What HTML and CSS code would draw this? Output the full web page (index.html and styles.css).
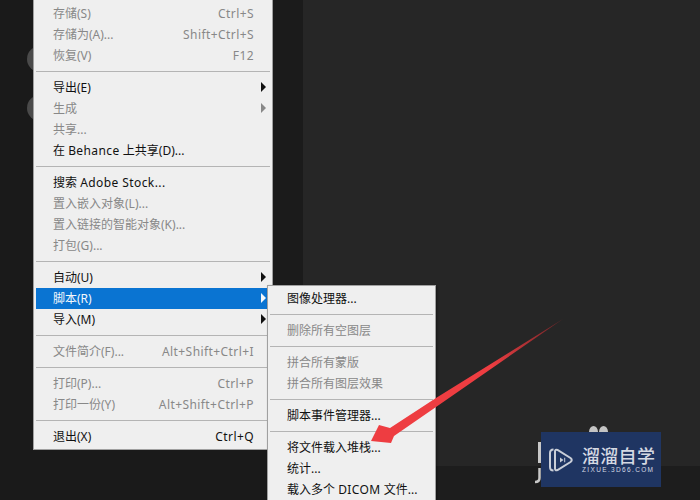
FILE: index.html
```html
<!DOCTYPE html>
<html lang="zh-CN">
<head>
<meta charset="utf-8">
<title>脚本菜单</title>
<link rel="stylesheet" href="styles.css">
</head>
<body>
<div class="desk">
  <div class="side"><span class="dot dot-a"></span><span class="dot dot-b"></span></div>
  <div class="gutter"></div>
  <div class="canvas"></div>
  <div class="bottom"></div>
  <div class="main menu">
    <div class="row off"><span>存储(S)</span><span class="lat">Ctrl+S</span></div>
    <div class="row off"><span>存储为(A)...</span><span class="lat">Shift+Ctrl+S</span></div>
    <div class="row off"><span>恢复(V)</span><span class="lat">F12</span></div>
    <div class="sep"></div>
    <div class="row arrow"><span>导出(E)</span></div>
    <div class="row off arrow"><span>生成</span></div>
    <div class="row off"><span>共享...</span></div>
    <div class="row"><span>在 <span class="lat">Behance</span> 上共享(D)...</span></div>
    <div class="sep"></div>
    <div class="row"><span>搜索 <span class="lat">Adobe Stock...</span></span></div>
    <div class="row off"><span>置入嵌入对象(L)...</span></div>
    <div class="row off"><span>置入链接的智能对象(K)...</span></div>
    <div class="row off"><span>打包(G)...</span></div>
    <div class="sep"></div>
    <div class="row arrow"><span>自动(U)</span></div>
    <div class="row arrow active"><span>脚本(R)</span></div>
    <div class="row arrow"><span>导入(M)</span></div>
    <div class="sep"></div>
    <div class="row off"><span>文件简介(F)...</span><span class="lat">Alt+Shift+Ctrl+I</span></div>
    <div class="sep"></div>
    <div class="row off"><span>打印(P)...</span><span class="lat">Ctrl+P</span></div>
    <div class="row off"><span>打印一份(Y)</span><span class="lat">Alt+Shift+Ctrl+P</span></div>
    <div class="sep"></div>
    <div class="row"><span>退出(X)</span><span class="lat">Ctrl+Q</span></div>
  </div>
  <div class="sub menu">
    <div class="row"><span>图像处理器...</span></div>
    <div class="sep"></div>
    <div class="row off"><span>删除所有空图层</span></div>
    <div class="sep"></div>
    <div class="row off"><span>拼合所有蒙版</span></div>
    <div class="row off"><span>拼合所有图层效果</span></div>
    <div class="sep"></div>
    <div class="row"><span>脚本事件管理器...</span></div>
    <div class="sep"></div>
    <div class="row"><span>将文件载入堆栈...</span></div>
    <div class="row"><span>统计...</span></div>
    <div class="row"><span>载入多个 <span class="lat">DICOM</span> 文件...</span></div>
  </div>
  <svg class="pointer" viewBox="0 0 700 500" aria-hidden="true">
    <defs>
      <linearGradient id="tail" gradientUnits="userSpaceOnUse" x1="563" y1="319" x2="490" y2="365">
        <stop offset="0" stop-color="#6b2427"/>
        <stop offset="1" stop-color="#ee3d41"/>
      </linearGradient>
    </defs>
    <polygon points="563,319 436,398 390,428 379,425 371,441 391,443 394,436 436,407" fill="url(#tail)"/>
    <path d="M539.500 442 V463" fill="none" stroke="#c8c8c8" stroke-width="3"/>
    <path d="M539.500 468 V478 Q539.500 482 535 482" fill="none" stroke="#c8c8c8" stroke-width="2.500"/>
  </svg>
  <div class="mark-bits"><span></span><span></span></div>
  <div class="badge">
    <svg class="logo" viewBox="0 0 24 24" aria-hidden="true">
      <path d="M4.500 1.500 Q1 1.500 1 5 V19 Q1 22.500 4.500 22.500" fill="none" stroke="#c9ced8" stroke-width="2"/>
      <path d="M6 3.500 Q6 1 8.500 2 L21.500 10 Q24 12 21.500 14 L8.500 22 Q6 23 6 20.500 Z" fill="none" stroke="#c9ced8" stroke-width="2"/>
      <path d="M11 9.500 L14.500 12 L11 14.500 Z M15.200 9.700 H16.200 V14.300 H15.200 Z" fill="#c9ced8"/>
    </svg>
    <div class="brand">
      <div class="brand-cn">溜溜自学</div>
      <div class="brand-en">ZIXUE.3D66.COM</div>
    </div>
  </div>
</div>
</body>
</html>
```

FILE: styles.css
```css
* { box-sizing: border-box; }
html, body { margin: 0; padding: 0; }
body { width: 700px; height: 500px; overflow: hidden; background: #1a1a1a; font-family: "Noto Sans", "Noto Sans CJK SC", sans-serif; }
.desk { position: relative; width: 700px; height: 500px; overflow: hidden; background: #1a1a1a; }
.side { position: absolute; left: 0; top: 0; width: 33px; height: 500px; }
.dot { position: absolute; left: 27px; width: 26px; height: 26px; border-radius: 50%; background: #4a4a4a; }
.dot-a { top: 46px; }
.dot-b { top: 95px; }
.gutter { position: absolute; left: 272px; top: 0; width: 31px; height: 500px; background: #1b1b1b; }
.canvas { position: absolute; left: 303px; top: 0; width: 397px; height: 466px; background: #262626; }
.bottom { position: absolute; left: 272px; top: 466px; width: 428px; height: 34px; background: #1d1d1d; }
.menu { position: absolute; background: #efefef; font-size: 12px; }
.main { left: 33px; top: 0; width: 240px; height: 450px; padding: 3px 2px; border: 1px solid #a0a0a0; border-top: 0; }
.sub { left: 267px; top: 285px; width: 169px; height: 225px; padding: 2px 2px 0; border: 1px solid #a0a0a0; box-shadow: 1px 1px 2px rgba(0,0,0,.4); }
.row { display: flex; justify-content: space-between; align-items: center; height: 21px; padding: 0 16px 1px 17px; color: #111; white-space: nowrap; position: relative; }
.lat { letter-spacing: 0.42px; }
.off { color: #888; }
.active { background: #0a74d2; color: #f4f8fc; }
.arrow::after { content: ""; position: absolute; right: 4px; top: 5px; border-left: 5px solid currentColor; border-top: 5px solid transparent; border-bottom: 5px solid transparent; }
.sep { height: 1px; margin: 5px 0; background: #b4b4b4; }
.pointer { position: absolute; left: 0; top: 0; width: 700px; height: 500px; }
.mark-bits { position: absolute; left: 589px; top: 426px; display: flex; gap: 1px; }
.mark-bits span { width: 9px; height: 12px; border-radius: 50% 50% 0 0; background: #c4c4c4; }
.badge { position: absolute; left: 541px; top: 432px; width: 120px; height: 55px; background: #1f3562; display: flex; align-items: center; gap: 9px; padding: 0 0 0 8px; }
.logo { width: 24px; height: 24px; flex: none; }
.brand { color: #d5d9e2; display: flex; flex-direction: column; gap: 1px; }
.brand-cn { font-family: "Noto Sans CJK SC", sans-serif; font-size: 18px; line-height: 20px; letter-spacing: 0.3px; font-weight: 500; white-space: nowrap; }
.brand-en { font-family: "Liberation Sans", sans-serif; font-size: 6.500px; line-height: 8px; letter-spacing: 1.35px; white-space: nowrap; }
```
